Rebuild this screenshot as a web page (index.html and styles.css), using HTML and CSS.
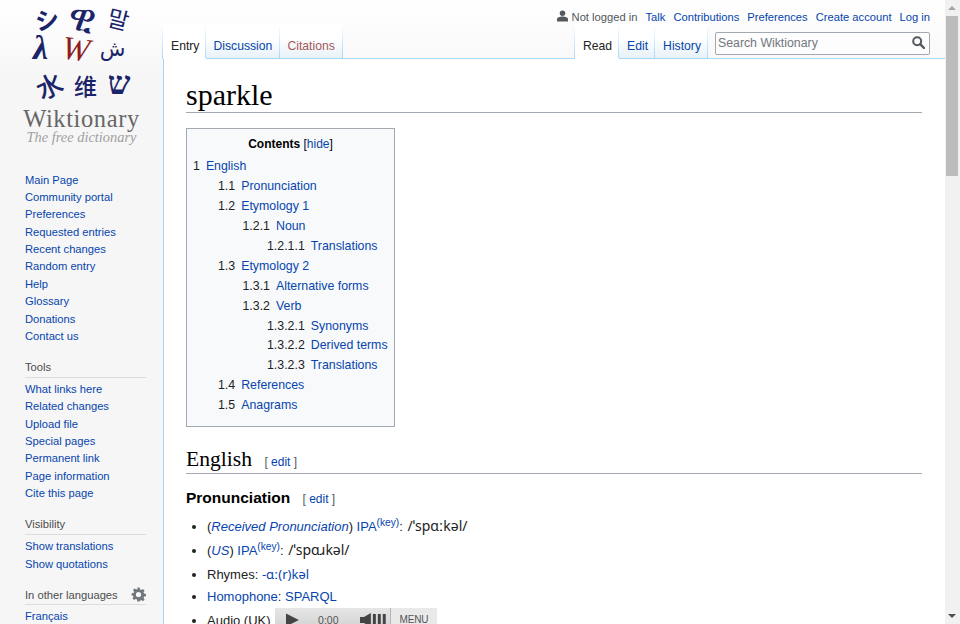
FILE: index.html
```html
<!DOCTYPE html>
<html lang="en">
<head>
    <meta charset="UTF-8">
    <meta name="viewport" content="width=device-width, initial-scale=1.0">
    <title>sparkle - Wiktionary</title>
    <link rel="stylesheet" href="styles.css">
</head>
<body>
<div class="window">
    <div class="viewport">
        <aside class="sidebar">
            <div class="logo">
                <div class="logo-glyphs">
                    <span class="g g-a" lang="ja">シ</span>
                    <span class="g g-b">ዊ</span>
                    <span class="g g-c" lang="ko">말</span>
                    <span class="g g-d">λ</span>
                    <span class="g g-w">W</span>
                    <span class="g g-e">ش</span>
                    <span class="g g-f" lang="ja">水</span>
                    <span class="g g-g" lang="zh">维</span>
                    <span class="g g-h">ש</span>
                </div>
                <div class="logo-name">Wiktionary</div>
                <div class="logo-tag">The free dictionary</div>
            </div>
            <ul class="nav-list first">
                <li><a href="#">Main Page</a></li>
                <li><a href="#">Community portal</a></li>
                <li><a href="#">Preferences</a></li>
                <li><a href="#">Requested entries</a></li>
                <li><a href="#">Recent changes</a></li>
                <li><a href="#">Random entry</a></li>
                <li><a href="#">Help</a></li>
                <li><a href="#">Glossary</a></li>
                <li><a href="#">Donations</a></li>
                <li><a href="#">Contact us</a></li>
            </ul>
            <h3 class="nav-head">Tools</h3>
            <ul class="nav-list">
                <li><a href="#">What links here</a></li>
                <li><a href="#">Related changes</a></li>
                <li><a href="#">Upload file</a></li>
                <li><a href="#">Special pages</a></li>
                <li><a href="#">Permanent link</a></li>
                <li><a href="#">Page information</a></li>
                <li><a href="#">Cite this page</a></li>
            </ul>
            <h3 class="nav-head">Visibility</h3>
            <ul class="nav-list">
                <li><a href="#">Show translations</a></li>
                <li><a href="#">Show quotations</a></li>
            </ul>
            <h3 class="nav-head lang-head">In other languages
                <svg class="gear" viewBox="-1 -1 26 26" width="15" height="15"><path fill="#72777d" fill-rule="evenodd" d="M10 0h4l.6 3.300 2.300 1 2.800-1.900 2.900 2.900-1.900 2.800 1 2.300 3.300.6v4l-3.300.6-1 2.300 1.900 2.800-2.900 2.900-2.800-1.900-2.300 1L14 24h-4l-.6-3.300-2.300-1-2.800 1.900-2.900-2.900 1.900-2.800-1-2.300L0 14v-4l3.300-.6 1-2.300-1.900-2.800 2.900-2.900 2.800 1.900 2.300-1zM12 7.500a4.500 4.500 0 1 0 0 9 4.500 4.500 0 0 0 0-9z"/></svg>
            </h3>
            <ul class="nav-list">
                <li><a href="#">Français</a></li>
            </ul>
        </aside>
        <div class="column">
            <div class="personal">
                <svg class="user-icon" viewBox="0 0 12 12" width="11" height="12"><circle cx="6" cy="3" r="3" fill="#54595d"/><path fill="#54595d" d="M0 12V9.500C0 7.500 3 6.500 6 6.500s6 1 6 3V12z"/></svg>
                <span class="anon">Not logged in</span>
                <a href="#">Talk</a>
                <a href="#">Contributions</a>
                <a href="#">Preferences</a>
                <a href="#">Create account</a>
                <a href="#">Log in</a>
            </div>
            <div class="tabbar">
                <div class="tabs">
                    <a class="tab selected" href="#">Entry</a>
                    <a class="tab" href="#">Discussion</a>
                    <a class="tab red" href="#">Citations</a>
                </div>
                <div class="tabs right">
                    <a class="tab selected" href="#">Read</a>
                    <a class="tab" href="#">Edit</a>
                    <a class="tab" href="#">History</a>
                </div>
                <div class="search">
                    <span class="search-text">Search Wiktionary</span>
                    <svg viewBox="0 0 13 13" width="13" height="13"><circle cx="5.200" cy="5.200" r="4" fill="none" stroke="#54595d" stroke-width="2"/><path d="M8.200 8.200l3.800 3.800" stroke="#54595d" stroke-width="2.400" stroke-linecap="round"/></svg>
                </div>
            </div>
            <main class="content">
                <h1 class="title">sparkle</h1>
                <div class="toc">
                    <div class="toc-title"><b>Contents</b> <span class="bracket">[<a href="#">hide</a>]</span></div>
                    <ul>
                        <li class="l1"><span>1</span><a href="#">English</a></li>
                        <li class="l2"><span>1.1</span><a href="#">Pronunciation</a></li>
                        <li class="l2"><span>1.2</span><a href="#">Etymology 1</a></li>
                        <li class="l3"><span>1.2.1</span><a href="#">Noun</a></li>
                        <li class="l4"><span>1.2.1.1</span><a href="#">Translations</a></li>
                        <li class="l2"><span>1.3</span><a href="#">Etymology 2</a></li>
                        <li class="l3"><span>1.3.1</span><a href="#">Alternative forms</a></li>
                        <li class="l3"><span>1.3.2</span><a href="#">Verb</a></li>
                        <li class="l4"><span>1.3.2.1</span><a href="#">Synonyms</a></li>
                        <li class="l4"><span>1.3.2.2</span><a href="#">Derived terms</a></li>
                        <li class="l4"><span>1.3.2.3</span><a href="#">Translations</a></li>
                        <li class="l2"><span>1.4</span><a href="#">References</a></li>
                        <li class="l2"><span>1.5</span><a href="#">Anagrams</a></li>
                    </ul>
                </div>
                <h2 class="lang-title">English <span class="edit">[ <a href="#">edit</a> ]</span></h2>
                <h3 class="sub-title">Pronunciation <span class="edit">[ <a href="#">edit</a> ]</span></h3>
                <ul class="pron">
                    <li>(<a href="#"><i>Received Pronunciation</i></a>) <a href="#">IPA</a><sup><a href="#">(key)</a></sup>: <span class="ipa">/ˈspɑːkəl/</span></li>
                    <li>(<a href="#"><i>US</i></a>) <a href="#">IPA</a><sup><a href="#">(key)</a></sup>: <span class="ipa">/ˈspɑɹkəl/</span></li>
                    <li class="tight">Rhymes: <a href="#" class="ipa rhyme">-ɑː(r)kəl</a></li>
                    <li class="mid"><a href="#">Homophone</a>: <a href="#">SPARQL</a></li>
                    <li class="audio">Audio (UK)
                        <div class="player">
                            <svg class="play" viewBox="0 0 14 14" width="13" height="14"><path fill="#444" d="M0 0l14 7-14 7z"/></svg>
                            <span class="time">0:00</span>
                            <svg class="vol" viewBox="0 0 26 14" width="26" height="14"><path fill="#444" d="M0 4h4l7-4v14l-7-4H0zM13 1h3v12h-3zM18 1h3v12h-3zM23 1h3v12h-3z"/></svg>
                            <span class="menu">MENU</span>
                        </div>
                    </li>
                </ul>
            </main>
        </div>
    </div>
    <div class="scrollbar">
        <span class="arrow up"></span>
        <div class="track"><div class="thumb"></div></div>
        <span class="arrow down"></span>
    </div>
</div>
</body>
</html>
```

FILE: styles.css
```css
html, body {
    margin: 0;
    height: 100%;
    overflow: hidden;
}
body {
    font-family: "Liberation Sans", Arial, sans-serif;
    color: #222;
    background: #f6f6f6;
}
a {
    color: #0645ad;
    text-decoration: none;
}
ul {
    list-style: none;
    margin: 0;
    padding: 0;
}
.window {
    display: flex;
    width: 960px;
    height: 624px;
    overflow: hidden;
}
.viewport {
    flex: 1;
    display: flex;
    min-width: 0;
    background: linear-gradient(#fff 0, #f6f6f6 80px);
}

/* sidebar */
.sidebar {
    width: 163px;
    flex: none;
    font-size: 11.2px;
}
.logo {
    height: 171.5px;
    text-align: center;
}
.logo-glyphs {
    display: grid;
    grid-template-columns: 37px 36px 36px;
    grid-template-rows: 29px 33px 38px;
    align-items: center;
    justify-items: center;
    padding: 4px 0 0 28px;
    color: #1b2468;
    font-family: "Noto Sans CJK JP", "DejaVu Sans", sans-serif;
    line-height: 1;
}
.g {
    display: block;
    font-size: 24px;
}
.g-a { font-weight: 700; transform: rotate(-8deg); }
.g-b { font-family: "DejaVu Sans", sans-serif; font-size: 40px; margin-top: -3px; transform: rotate(12deg); }
.g-c { font-family: "Noto Sans CJK KR", sans-serif; font-size: 23px; transform: rotate(14deg); }
.g-d { font-family: "Liberation Serif", serif; font-style: italic; font-weight: 700; font-size: 34px; margin-left: -12px; margin-top: -3px; }
.g-w { font-family: "Liberation Serif", serif; color: #8f1d1d; font-style: italic; font-size: 33px; margin-left: -14px; transform: rotate(8deg); }
.g-e { font-family: "DejaVu Sans", sans-serif; font-size: 21px; margin-left: -13px; }
.g-f { font-size: 26px; font-weight: 500; transform: rotate(-25deg); margin-left: 6px; }
.g-g { font-family: "Noto Sans CJK SC", sans-serif; font-size: 23px; font-weight: 500; margin-left: 5px; }
.g-h { font-family: "Liberation Serif", serif; font-size: 32px; font-weight: 700; margin-top: -4px; }
.logo-name {
    font-family: "Liberation Serif", serif;
    font-size: 24.5px;
    letter-spacing: 0.6px;
    color: #666;
    line-height: 22px;
    margin-top: 4px;
}
.logo-tag {
    font-family: "Liberation Serif", serif;
    font-style: italic;
    font-size: 14.4px;
    color: #a0a0a0;
    line-height: 16px;
    margin-top: -1px;
}
.nav-list {
    padding-left: 25px;
}
.nav-list li {
    height: 17.4px;
    line-height: 17.4px;
    white-space: nowrap;
}
.nav-head {
    margin: 14.5px 17px 3px 25px;
    padding-bottom: 3px;
    height: 14px;
    line-height: 14px;
    font-size: 11.2px;
    font-weight: normal;
    color: #4d4d4d;
    border-bottom: 1px solid #ddd;
    display: flex;
    justify-content: space-between;
    align-items: center;
}
.nav-head.lang-head {
    margin-top: 15px;
    margin-bottom: 3px;
    padding-bottom: 2px;
}

/* top */
.column {
    flex: 1;
    min-width: 0;
    display: flex;
    flex-direction: column;
}
.personal {
    height: 30px;
    display: flex;
    justify-content: flex-end;
    align-items: center;
    gap: 8px;
    padding: 4px 15px 0 0;
    box-sizing: border-box;
    font-size: 11.2px;
}
.personal .user-icon {
    margin-right: -4px;
    margin-top: -2px;
}
.anon {
    color: #54595d;
}
.tabbar {
    height: 28px;
    display: flex;
    align-items: stretch;
    border-bottom: 1px solid #a7d7f9;
}
.tabs {
    display: flex;
    margin: -6px 0 -1px;
    padding-left: 1px;
    background: linear-gradient(#fff, #a7d7f9) left/1px 100% no-repeat;
}
.tabs:first-child {
    margin-left: -1px;
}
.tabs.right {
    margin-left: auto;
    margin-right: 7px;
}
.tab {
    display: flex;
    align-items: center;
    padding: 9px 7px 0 8px;
    font-size: 12.2px;
    border-bottom: 1px solid #a7d7f9;
    background: linear-gradient(#fff, #a7d7f9) right/1px 100% no-repeat, linear-gradient(#fff 40%, #e8f2f8);
}
.tabs:first-child .tab:not(.selected) {
    padding-left: 7px;
    padding-right: 8px;
}
.tab.selected {
    color: #222;
    background: linear-gradient(#fff, #a7d7f9) right/1px 100% no-repeat, #fff;
    border-bottom-color: #fff;
}
.tab.red {
    color: #a55858;
}
.search {
    align-self: flex-start;
    width: 215px;
    height: 23px;
    margin: 2px 15px 0 0;
    box-sizing: border-box;
    border: 1px solid #a2a9b1;
    border-radius: 2px;
    background: rgba(255, 255, 255, 0.6);
    display: flex;
    align-items: center;
    justify-content: space-between;
    padding: 0 4px 2px 2px;
    font-size: 12.3px;
    color: #72777d;
}

/* content */
.content {
    flex: 1;
    background: #fff;
    border-left: 1px solid #a7d7f9;
    padding: 20px 23px 0 22px;
    overflow: hidden;
    font-size: 12.35px;
    line-height: 20px;
}
.title {
    font-family: "Liberation Serif", serif;
    font-weight: normal;
    font-size: 30px;
    line-height: 32px;
    margin: 0;
    padding-bottom: 1px;
    border-bottom: 1px solid #a2a9b1;
    color: #000;
}
.toc {
    width: 209px;
    margin-top: 15px;
    box-sizing: border-box;
    border: 1px solid #a2a9b1;
    background: #f8f9fa;
    padding: 6px 6px 11px 6px;
}
.toc-title {
    text-align: center;
    font-size: 12px;
    margin-bottom: 2px;
    line-height: 19px;
    color: #000;
}
.toc li {
    white-space: nowrap;
    height: 19.95px;
    line-height: 20px;
}
.toc li span {
    margin-right: 6px;
    color: #222;
}
.l2 { padding-left: 25px; }
.l3 { padding-left: 49.5px; }
.l4 { padding-left: 74px; }
.lang-title {
    font-family: "Liberation Serif", serif;
    font-weight: normal;
    font-size: 21.6px;
    line-height: 22px;
    margin: 21px 0 0;
    border-bottom: 1px solid #a2a9b1;
    color: #000;
}
.edit {
    font-family: "Liberation Sans", Arial, sans-serif;
    font-size: 12px;
    margin-left: 7px;
    color: #54595d;
}
.sub-title {
    font-size: 15.5px;
    font-weight: bold;
    color: #000;
    line-height: 20px;
    margin: 14px 0 0;
}
.sub-title .edit {
    font-weight: normal;
    margin-left: 8px;
}
.pron {
    list-style: disc;
    padding-left: 21px;
    margin-top: 5px;
    font-size: 13px;
}
.pron li {
    height: 24px;
    line-height: 24px;
    white-space: nowrap;
}
.pron li.tight {
    height: 23px;
}
.pron li.mid {
    height: 23px;
}
.pron li.audio {
    line-height: 25px;
}
.pron sup {
    font-size: 10.2px;
    line-height: 1;
}
.ipa {
    font-family: "Noto Sans", "DejaVu Sans", sans-serif;
    font-size: 14px;
    margin-left: 1px;
}
.ipa.rhyme {
    font-size: 13px;
    margin-left: 0;
}
.player {
    display: inline-flex;
    align-items: center;
    vertical-align: top;
    width: 162px;
    height: 24px;
    box-sizing: border-box;
    padding-left: 11px;
    background: linear-gradient(#e6e6e6, #cfcfcf);
    font-size: 10.5px;
    color: #555;
    margin-left: 1px;
}
.time {
    margin: 0 21px 0 19px;
    width: 21px;
}
.menu {
    margin-left: 4px;
    width: 47px;
    height: 100%;
    line-height: 24px;
    border-left: 1px solid #b5b5b5;
    background: #e9e9e9;
    text-align: center;
    font-size: 10px;
    letter-spacing: -0.2px;
}

/* scrollbar */
.scrollbar {
    width: 15px;
    flex: none;
    background: #f1f1f1;
    display: flex;
    flex-direction: column;
}
.arrow {
    flex: none;
    height: 16px;
    position: relative;
}
.arrow::after {
    content: "";
    position: absolute;
    left: 3px;
    border-left: 4px solid transparent;
    border-right: 4px solid transparent;
}
.arrow.up::after {
    top: 6px;
    border-bottom: 4px solid #a3a3a3;
}
.arrow.down::after {
    top: 6px;
    border-top: 4px solid #505050;
}
.track {
    flex: 1;
}
.thumb {
    height: 160px;
    margin: 0 2px 0 1px;
    background: #bcbcbc;
}
```
